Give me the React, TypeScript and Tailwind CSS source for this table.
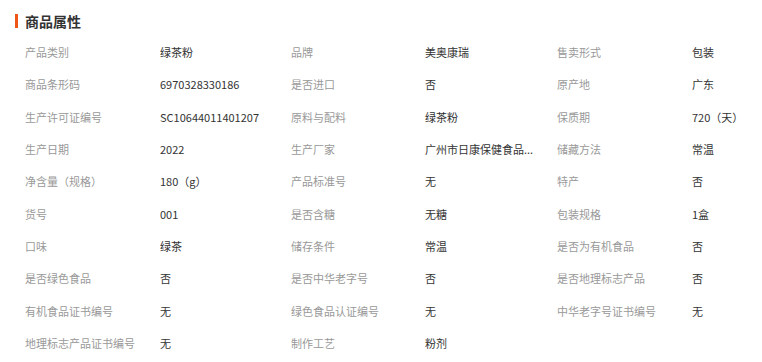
import React from "react";

type Attr = { label: string; value: string };

const ATTRS: Attr[] = [
  { label: "产品类别", value: "绿茶粉" },
  { label: "品牌", value: "美奥康瑞" },
  { label: "售卖形式", value: "包装" },
  { label: "商品条形码", value: "6970328330186" },
  { label: "是否进口", value: "否" },
  { label: "原产地", value: "广东" },
  { label: "生产许可证编号", value: "SC10644011401207" },
  { label: "原料与配料", value: "绿茶粉" },
  { label: "保质期", value: "720（天）" },
  { label: "生产日期", value: "2022" },
  { label: "生产厂家", value: "广州市日康保健食品..." },
  { label: "储藏方法", value: "常温" },
  { label: "净含量（规格）", value: "180（g）" },
  { label: "产品标准号", value: "无" },
  { label: "特产", value: "否" },
  { label: "货号", value: "001" },
  { label: "是否含糖", value: "无糖" },
  { label: "包装规格", value: "1盒" },
  { label: "口味", value: "绿茶" },
  { label: "储存条件", value: "常温" },
  { label: "是否为有机食品", value: "否" },
  { label: "是否绿色食品", value: "否" },
  { label: "是否中华老字号", value: "否" },
  { label: "是否地理标志产品", value: "否" },
  { label: "有机食品证书编号", value: "无" },
  { label: "绿色食品认证编号", value: "无" },
  { label: "中华老字号证书编号", value: "无" },
  { label: "地理标志产品证书编号", value: "无" },
  { label: "制作工艺", value: "粉剂" },
];

export default function App() {
  return (
    <div
      className="w-[762px] h-[362px] overflow-hidden bg-white text-[#333]"
      style={{ fontFamily: '"Noto Sans CJK SC", "Noto Sans", sans-serif' }}
    >
      {/* title */}
      <div className="h-[36px] pt-[13px] pl-[15px] flex items-start">
        <span className="mt-[1px] w-[3px] h-[14px] bg-[#ee5519]" />
        <h2 className="ml-[7px] text-[14px] leading-[16px] font-bold text-[#333]">商品属性</h2>
      </div>

      {/* attribute grid */}
      <div className="pl-[25px] grid grid-cols-[135px_131px_134px_132px_135px_131px] w-[823px]">
        {ATTRS.map(({ label, value }) => (
          <React.Fragment key={label}>
            <div className="h-[32.33px] flex items-center text-[11px] text-[#999] whitespace-nowrap">
              {label}
            </div>
            <div className="h-[32.33px] flex items-center text-[11px] text-[#333] whitespace-nowrap">
              {value}
            </div>
          </React.Fragment>
        ))}
      </div>
    </div>
  );
}
